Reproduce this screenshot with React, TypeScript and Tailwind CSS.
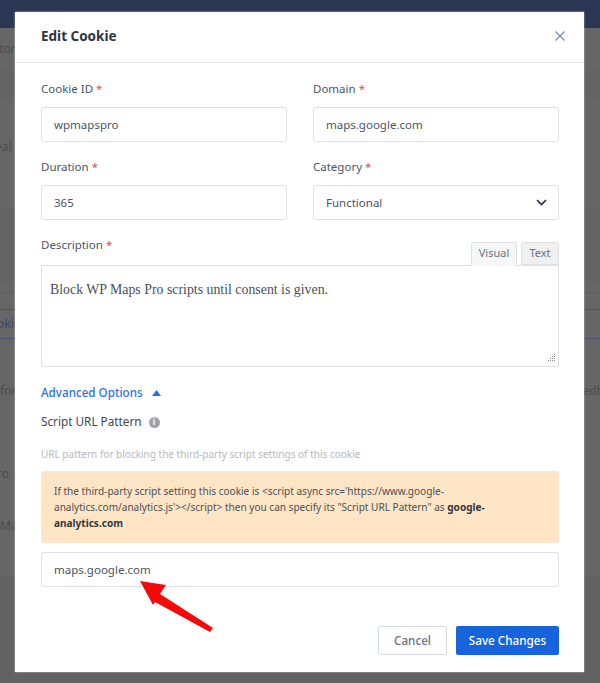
const font = "[font-family:'Noto_Sans',sans-serif]";

function Star() {
  return <span className="text-[#ef4444]">*</span>;
}

function Field({ label, value, select }: { label: string; value: string; select?: boolean }) {
  return (
    <div className="flex flex-col">
      <label className="h-[24px] text-[11.5px] leading-[24px] text-[#4b5563]">
        {label} <Star />
      </label>
      <div className="mt-[6px] flex h-[35px] items-center justify-between rounded-[3px] border border-[#dfe1e5] bg-white pl-[12px] pr-[11px] text-[11.5px] text-[#4b5563]">
        <span>{value}</span>
        {select && (
          <svg width="11" height="7" viewBox="0 0 11 7" fill="none" stroke="#1f2937" strokeWidth="1.6">
            <path d="M1 1l4.5 4.5L10 1" />
          </svg>
        )}
      </div>
    </div>
  );
}

export default function App() {
  return (
    <div className={`relative h-[683px] w-[600px] overflow-hidden bg-[#666666] text-[12px] text-[#4c4c4c] ${font}`}>
      <div className="h-[28px] bg-[#2a3653]" />
      <div className="flex h-[42px] items-center whitespace-nowrap">
        <span className="-ml-[1px]">tor</span>
      </div>
      <div className="h-[27px] bg-[#636363]" />
      <div className="flex h-[111px] items-center whitespace-nowrap pb-[12px]">
        <span className="-ml-[5px]">eal</span>
      </div>
      <div className="h-[74px] bg-[#636363]" />
      <div className="h-[11px] border-b border-[#5c5c5c]" />
      <div className="h-[16px]" />
      <div className="flex h-[30px] items-center whitespace-nowrap border-y border-[#4a5270] font-medium text-[#3f4a70]">
        <span className="-ml-[3px]">oki</span>
      </div>
      <div className="mt-[42px] flex h-[20px] items-center justify-between whitespace-nowrap">
        <span>for</span>
        <span className="-mr-[4px]">edb</span>
      </div>
      <div className="mt-[63px] flex h-[20px] items-center whitespace-nowrap">
        <span className="-ml-[3px]">ro</span>
      </div>
      <div className="mt-[32px] flex h-[20px] items-center whitespace-nowrap">
        <span>Ma</span>
      </div>
      <div className="mt-[41px] h-[106px] border-t border-[#5c5c5c] bg-[#626262]" />

      <div className="absolute left-[15px] top-[12px] flex h-[660px] w-[569px] flex-col bg-white shadow-[0_0_2px_rgba(255,255,255,0.6)]">
        <div className="flex h-[51px] shrink-0 items-center justify-between border-b border-[#e5e7eb] pb-[2px] pl-[26px] pr-[19px]">
          <h2 className="text-[13.5px] font-bold text-[#2d3440]">Edit Cookie</h2>
          <svg width="10" height="10" viewBox="0 0 10 10" stroke="#7b8aa0" strokeWidth="1.2">
            <path d="M.5.5l9 9M9.5.5l-9 9" />
          </svg>
        </div>
        <div className="flex flex-1 flex-col pl-[26px] pr-[25px]">
          <div className="mt-[14px] grid grid-cols-2 gap-x-[26px] gap-y-[13px]">
            <Field label="Cookie ID" value="wpmapspro" />
            <Field label="Domain" value="maps.google.com" />
            <Field label="Duration" value="365" />
            <Field label="Category" value="Functional" select />
          </div>

          <div className="mt-[14px] flex h-[31px] items-start justify-between">
            <label className="text-[11.5px] leading-[22px] text-[#4b5563]">
              Description <Star />
            </label>
            <div className="flex items-start self-end text-[11px] text-[#6b7280]">
              <div className="relative z-10 -mb-px flex h-[24px] w-[46px] items-center justify-center rounded-t-[2px] border border-b-0 border-[#dfe1e5] bg-[#f6f7f7] pb-[2px]">
                Visual
              </div>
              <div className="ml-[4px] flex h-[23px] w-[38px] items-center justify-center rounded-t-[2px] border border-[#dfe1e5] bg-[#f0f0f1]">
                Text
              </div>
            </div>
          </div>
          <div className="relative h-[102px] rounded-b-[2px] border border-[#dfe1e5] bg-white px-[8px] py-[14px] font-['Liberation_Serif',serif] text-[13.85px] leading-[20px] text-[#4a4f57]">
            Block WP Maps Pro scripts until consent is given.
            <svg className="absolute bottom-[3px] right-[2px]" width="9" height="9" viewBox="0 0 9 9" fill="#888">
              <path d="M7 0h1v1H7zM5 2h1v1H5zM7 2h1v1H7zM3 4h1v1H3zM5 4h1v1H5zM7 4h1v1H7zM1 6h1v1H1zM3 6h1v1H3zM5 6h1v1H5zM7 6h1v1H7z" />
            </svg>
          </div>

          <div className="mt-[16px] flex h-[20px] items-center gap-[9px] text-[11.65px] font-medium text-[#2f6fde]">
            Advanced Options
            <svg width="9" height="6" viewBox="0 0 9 6" fill="#2f6fde">
              <path d="M4.5 0L9 6H0z" />
            </svg>
          </div>
          <div className="mt-[9px] flex h-[20px] items-center gap-[7px] text-[11.75px] text-[#3f4650]">
            Script URL Pattern
            <span className="flex h-[11px] w-[11px] items-center justify-center rounded-full bg-[#9ca3af] text-[8px] font-bold leading-none text-white">
              i
            </span>
          </div>
          <p className="mt-[15px] h-[14px] text-[10px] leading-[14px] text-[#b4b8be]">
            URL pattern for blocking the third-party script settings of this cookie
          </p>
          <div className="mt-[10px] h-[72px] rounded-[3px] bg-[#fde5c5] px-[13px] py-[12px] text-[10.05px] leading-[16px] text-[#4b4f57]">
            If the third-party script setting this cookie is &lt;script async src='https://www.google-
            <br />
            analytics.com/analytics.js'&gt;&lt;/script&gt; then you can specify its "Script URL Pattern" as{" "}
            <b className="text-[#33373e]">google-</b>
            <br />
            <b className="text-[#33373e]">analytics.com</b>
          </div>
          <div className="mt-[9px] flex h-[35px] items-center rounded-[3px] border border-[#dfe1e5] bg-white px-[12px] text-[11.5px] text-[#4b5563]">
            maps.google.com
          </div>
          <div className="mt-[39px] flex justify-end gap-[9px]">
            <button className="h-[29px] w-[69px] rounded-[2px] border border-[#d5dae2] bg-white text-[11.7px] font-medium text-[#6b7280]">
              Cancel
            </button>
            <button className="h-[29px] w-[103px] rounded-[2px] bg-[#1763dc] text-[11.7px] font-medium text-white">
              Save Changes
            </button>
          </div>
        </div>
      </div>

      <svg className="absolute left-[138px] top-[580px]" width="78" height="54" viewBox="0 0 78 54">
        <path d="M2 1L28 5L22 14L75 48L72 52L17 22L15 25Z" fill="#f40a0a" />
      </svg>
    </div>
  );
}
